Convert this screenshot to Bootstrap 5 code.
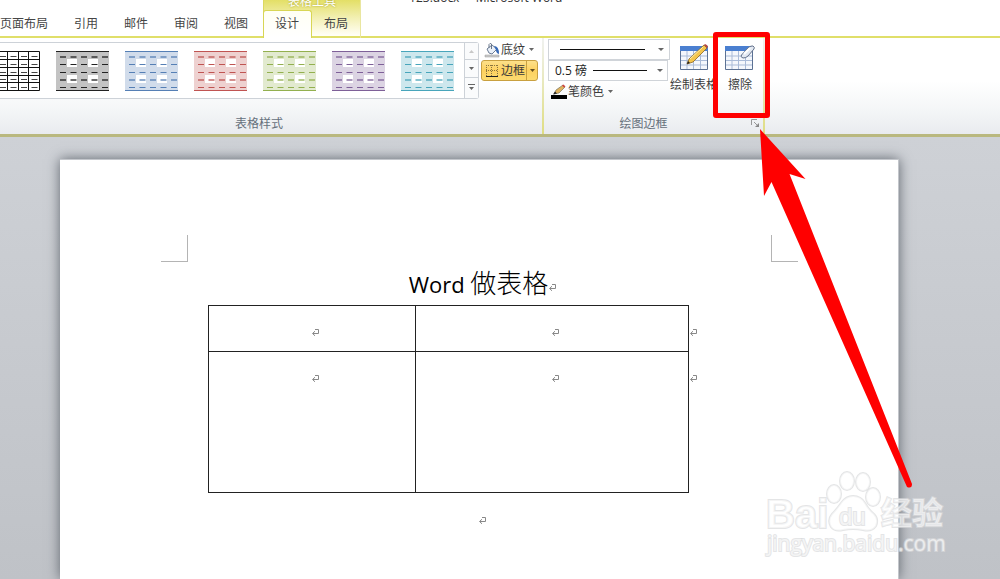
<!DOCTYPE html>
<html lang="zh-CN">
<head>
<meta charset="utf-8">
<meta name="viewport" content="width=device-width, initial-scale=1">
<title>123.docx - Microsoft Word</title>
<link href="https://cdn.jsdelivr.net/npm/bootstrap@5.3.0/dist/css/bootstrap.min.css" rel="stylesheet">
<style>
body{font-family:"Open Sans","Noto Sans CJK SC",sans-serif;font-size:12px;line-height:16px;color:#3b3b3b;background:#fff;overflow:hidden}
button{font-size:12px;color:#3b3b3b}
/* title and tab strip */
.tabstrip{height:38px;border-bottom:2px solid #e0df6a}
.main-tabs{column-gap:26px;height:26px;padding-right:15px}
.rtab{color:#454545;text-decoration:none;line-height:28px;height:26px}
.context{width:98px;height:38px;margin-bottom:-2px;background:linear-gradient(#e3df66,#f2efb0 45%,#fffef2 90%,#fff);border-left:1px solid #dcd860;border-right:1px solid #e9e6a0}
.context-title{height:10px;color:#fff;text-shadow:0 0 2px #a09a28}
.context-title span,.doc-title span{line-height:16px;white-space:pre}
.context .rtab{height:28px;padding:0 12px}
.context .rtab.active{background:linear-gradient(#fffff4,#fff);border:1px solid #d8d655;border-bottom:0;border-radius:3px 3px 0 0;margin-left:-1px;padding:0 11px;line-height:26px;width:49px}
.context-line{border-bottom:2px solid #e0df6a}
.doc-title{height:6px;margin-left:48px;color:#333}
/* ribbon */
.ribbon{height:99px;background:linear-gradient(#fff 45%,#f4f6f7 75%,#e9ebef);border-bottom:3px solid #b9b87f;z-index:2}
.ribbon-group{border-right:2px solid #e3e2a0;border-image:linear-gradient(#f0f2f2,#dfdd80) 1}
.styles-group{width:544px}
.borders-group{width:221px;padding-left:4px}
.group-title{color:#66707c;height:18px}
.styles-title{padding-right:24px}
.group-body{padding-top:4px;height:78px}
.gallery{height:57px;width:479px;border:1px solid #cdd2d8;border-left:0;border-radius:0 3px 3px 0;background:#fff}
.thumbs{gap:16px;padding-right:10px}
.thumb{width:53px;height:40px}
.spin{width:14px;background:#fafbfc;border-left:1px solid #cdd2d8}
.spin button+button{border-top:1px solid #cdd2d8!important}
.tool-stack{margin:-3px 0 0 2px}
.tool{height:21px;padding:0 2px;gap:1px;background:none;border:1px solid transparent;border-radius:3px;white-space:nowrap}
.tool.on{background:linear-gradient(#fde08a,#fdd160 50%,#fddb70);border-color:#c9a040}
.tool.on .drop{border-left:1px solid #c9a040;align-self:stretch;margin-right:-2px}
.drop{width:11px;justify-content:center}
.line-stack{margin-top:-3px}
.line-select{appearance:none;height:21px;border:1px solid #d0d4d9;padding:0 6px;color:#222;font-size:12px;background:#fff no-repeat right center}
.weight-select{width:120px;background-image:url("data:image/svg+xml,%3Csvg xmlns='http://www.w3.org/2000/svg' width='75' height='19'%3E%3Cpath d='M1 9.5h54' stroke='%23111'/%3E%3Cpath d='M65 8h6l-3 3z' fill='%23666'/%3E%3C/svg%3E")}
.style-select{width:122px;background-image:url("data:image/svg+xml,%3Csvg xmlns='http://www.w3.org/2000/svg' width='112' height='19'%3E%3Cpath d='M3 9.5h85' stroke='%23111'/%3E%3Cpath d='M101 8h6l-3 3z' fill='%23666'/%3E%3C/svg%3E")}
.big-tool{background:none;border:0;padding:2px 0 0;width:48px;white-space:nowrap}
.big-tool svg{display:block;margin:0 auto 4px}
.big-tool span{line-height:18px}
.erase{width:44px}
.launch{right:3px;bottom:6px}
.red-frame{left:-5px;top:-10px;width:57px;height:86px;border:5px solid #f00;border-radius:3px;pointer-events:none}
.red-arrow{left:39px;top:84px;pointer-events:none}
/* workspace */
.workspace{background:linear-gradient(#ced1d6,#bfc2c7);padding:22px 101px 0 60px}
.sheet{background:#fff;border:1px solid #c3c6cb;border-width:1px 1px 0 0;box-shadow:0 0 12px #5f656d;padding-top:75px}
.crop-row{padding:0 100px 0 101px}
.crop-mark{width:27px;height:27px;border-bottom:1px solid #b4b4b4}
.crop-left{border-right:1px solid #b4b4b4}
.crop-right{border-left:1px solid #b4b4b4}
.doc-body{padding:0 127px;color:#000}
.doc-heading{font:400 22px/42px "Open Sans","Noto Sans CJK SC",sans-serif;margin:0;padding-left:8px}
.doc-heading span{font-size:26px;font-weight:300}
.grid-table{width:481px;margin-left:21px;border-collapse:collapse}
.grid-table td{border:1px solid #222;padding:22px 0 0 7px;vertical-align:top;text-align:center;line-height:8px}
.grid-table tr{height:46px}
.grid-table tr+tr{height:141px}
.grid-table .c1{width:207px}
.row-end{left:100%;top:22px;margin-left:1px}
.pm{width:9px;height:9px;fill:none;stroke:#888}
.after{padding:23px 0 0 6px;line-height:8px}
.watermark{right:52px;bottom:18px;pointer-events:none}
</style>
</head>
<body class="vh-100 d-flex flex-column">
<svg class="d-none" aria-hidden="true">
  <symbol id="pilcrow" viewBox="0 0 9 9"><path d="M4 1.500h3.500v4H2M4 3.200L1.500 5.500 4 7.800"/></symbol>
  <symbol id="caret" viewBox="0 0 7 4"><path d="M0 0h7L3.500 4z"/></symbol>
  <symbol id="thumb" viewBox="0 0 53 40">
    <path d="M0 0h53v40H0z" fill="currentColor" opacity=".27"/>
    <path d="M0 .5h53M0 39.500h53" stroke="currentColor"/>
    <path d="M11 8h10v8H11zM32 8h10v8H32zM11 24h10v8H11zM32 24h10v8H32z" fill="#fff"/>
    <path d="M4 6h49M4 29h49" stroke="currentColor" stroke-width="2" stroke-dasharray="6 4.500" opacity=".65"/>
    <path d="M4 13.500h49M4 21.500h49M4 36.500h49" stroke="currentColor" stroke-dasharray="6 4.500"/>
  </symbol>
  <symbol id="sheet-icon" viewBox="0 0 30 28">
    <path d="M1.500 2.500h27v23h-27z" fill="#f4f7fc" stroke="#5b7193"/>
    <path d="M1 2h28v5H1z" fill="#4a7fd0"/>
    <path d="M2 12h26M2 16.500h26M2 21h26M8 7v18M14.500 7v18M21.500 7v18" stroke="#a9bbd8"/>
  </symbol>
</svg>

<header class="tabstrip d-flex align-items-end flex-shrink-0">
  <nav class="main-tabs d-flex" aria-label="功能区">
    <a class="rtab" href="#">页面布局</a><a class="rtab" href="#">引用</a><a class="rtab" href="#">邮件</a><a class="rtab" href="#">审阅</a><a class="rtab" href="#">视图</a>
  </nav>
  <div class="context d-flex flex-column">
    <div class="context-title d-flex justify-content-center align-items-end"><span>表格工具</span></div>
    <nav class="d-flex" aria-label="表格工具">
      <a class="rtab active" href="#" aria-current="page">设计</a><a class="rtab context-line flex-fill" href="#">布局</a>
    </nav>
  </div>
  <div class="doc-title d-flex align-items-end align-self-start"><span>123.docx  -  Microsoft Word</span></div>
</header>

<section class="ribbon d-flex flex-shrink-0 position-relative">
  <div class="ribbon-group styles-group d-flex flex-column">
    <div class="group-body d-flex">
      <div class="gallery d-flex">
        <div class="thumbs d-flex flex-fill justify-content-end align-items-center overflow-hidden">
          <svg class="thumb flex-shrink-0" viewBox="0 0 53 40"><path d="M.5.500h52v39H.5zM0 8.500h53M0 16.500h53M0 24.500h53M0 31.500h53M10.500 0v40M20.500 0v40M31.500 0v40M41.500 0v40" fill="none" stroke="#111"/><path d="M2.500 5.500h50M2.500 13.500h50M2.500 21.500h50M2.500 28.500h50M2.500 36.500h50" stroke="#444" stroke-dasharray="6 4.500"/></svg>
          <svg class="thumb flex-shrink-0" color="#222"><use href="#thumb"/></svg>
          <svg class="thumb flex-shrink-0" color="#557fb5"><use href="#thumb"/></svg>
          <svg class="thumb flex-shrink-0" color="#c05452"><use href="#thumb"/></svg>
          <svg class="thumb flex-shrink-0" color="#93b04f"><use href="#thumb"/></svg>
          <svg class="thumb flex-shrink-0" color="#7e6098"><use href="#thumb"/></svg>
          <svg class="thumb flex-shrink-0" color="#48a5bb"><use href="#thumb"/></svg>
        </div>
        <div class="spin d-flex flex-column">
          <button class="flex-fill border-0 p-0 bg-transparent d-flex align-items-center justify-content-center" aria-label="上一行"><svg width="5" height="3" fill="#c8c8c8"><path d="M0 3h5L2.500 0z"/></svg></button>
          <button class="flex-fill border-0 p-0 bg-transparent d-flex align-items-center justify-content-center" aria-label="下一行"><svg width="5" height="3" fill="#666"><use href="#caret"/></svg></button>
          <button class="flex-fill border-0 p-0 bg-transparent d-flex align-items-center justify-content-center" aria-label="其他"><svg width="7" height="7" fill="#666"><path d="M0 0h7v1H0zM1 3h5L3.500 6z"/></svg></button>
        </div>
      </div>
      <div class="tool-stack d-flex flex-column align-items-start">
        <button class="tool d-flex align-items-center">
          <svg width="16" height="16"><path d="M1 13h14v2H1z" fill="#ccc" stroke="#999" stroke-width=".5"/><path d="M3 7l5-4 5 4-5 5-3-1z" fill="#eaf0f8" stroke="#6b7c95"/><path d="M5 6V2.500Q6 .5 7.500 2v5" fill="none" stroke="#67758a"/><path d="M10 4q5 0 5 8-3-1-3-4z" fill="#3769b7"/></svg>
          <span>底纹</span><span class="drop d-flex align-items-center"><svg width="5" height="3" fill="#666"><use href="#caret"/></svg></span>
        </button>
        <button class="tool on d-flex align-items-center" aria-pressed="true">
          <svg width="16" height="16" fill="none" stroke="#8a7540"><path d="M2 2.500h12M2 7.500h12M2.500 2v11M7.500 2v11M13.500 2v11" stroke-dasharray="1 1"/><path d="M2 13.500h12" stroke="#222"/></svg>
          <span>边框</span><span class="drop d-flex align-items-center"><svg width="5" height="3" fill="#665020"><use href="#caret"/></svg></span>
        </button>
      </div>
    </div>
    <div class="group-title styles-title text-center">表格样式</div>
  </div>

  <div class="ribbon-group borders-group d-flex flex-column position-relative">
    <div class="group-body d-flex">
      <div class="line-stack d-flex flex-column align-items-start">
        <select class="line-select style-select" aria-label="笔样式"><option aria-label="单实线"></option></select>
        <select class="line-select weight-select" aria-label="笔划粗细"><option>0.5 磅</option></select>
        <button class="tool d-flex align-items-center">
          <svg width="16" height="16"><path d="M0 11h16v4H0z" fill="#000"/><path d="M3 10l2-4 7-5 2 2-6 6z" fill="#dfb35e" stroke="#665" stroke-width=".6"/><path d="M11 1.500l1.500-1 2 2-1.500 1z" fill="#c44"/><path d="M2 10.500l2-3 2 2z" fill="#222"/></svg>
          <span>笔颜色</span><span class="drop d-flex align-items-center"><svg width="5" height="3" fill="#666"><use href="#caret"/></svg></span>
        </button>
      </div>
      <button class="big-tool d-block text-center align-self-start">
        <svg width="30" height="28"><use href="#sheet-icon"/><path d="M8 20l2-5L25 1l3 3-14 14z" fill="#f4c54c" stroke="#8a6524" stroke-width=".8"/><path d="M25 1l1-1q3 1 3 3l-1 1z" fill="#b64845"/><path d="M8 20l1-3 2 2z" fill="#222"/><path d="M11 15L24 3" stroke="#fff0ab"/></svg>
        <span>绘制表格</span>
      </button>
      <div class="position-relative align-self-start">
        <button class="big-tool erase d-block text-center">
          <svg width="32" height="28"><use href="#sheet-icon" width="30" height="28"/><path d="M17.500 11L24 4q2-2 4-2h1q2 1 1 3l-6 7q-2 2-5 2-3-1-1.500-3z" fill="#e3e9f2" stroke="#63718a"/><path d="M20 10l6-6" stroke="#fff" stroke-width="2"/></svg>
          <span>擦除</span>
        </button>
        <div class="red-frame position-absolute"></div>
        <svg class="red-arrow position-absolute" width="160" height="364" fill="#f00" aria-hidden="true"><path d="M3 3L48.500 53 32.500 48 155 358q0 5-5 3L14.500 56 7 70z"/></svg>
      </div>
    </div>
    <div class="group-title text-center pe-4">绘图边框</div>
    <button class="launch position-absolute border-0 p-0 bg-transparent d-flex" aria-label="边框和底纹"><svg width="9" height="9" fill="none" stroke="#999"><path d="M.5 6V.5H6M3 3l4 4"/><path d="M8 4v4H4z" fill="#888" stroke="none"/></svg></button>
  </div>
</section>

<main class="workspace flex-fill d-flex flex-column position-relative">
  <article class="sheet flex-fill">
    <div class="crop-row d-flex justify-content-between"><span class="crop-mark crop-left"></span><span class="crop-mark crop-right"></span></div>
    <div class="doc-body">
      <h1 class="doc-heading text-center">Word <span>做表格</span><svg class="pm"><use href="#pilcrow"/></svg></h1>
      <table class="grid-table">
        <tr><td class="c1"><svg class="pm"><use href="#pilcrow"/></svg></td><td class="position-relative"><svg class="pm"><use href="#pilcrow"/></svg><svg class="pm row-end position-absolute"><use href="#pilcrow"/></svg></td></tr>
        <tr><td class="c1"><svg class="pm"><use href="#pilcrow"/></svg></td><td class="position-relative"><svg class="pm"><use href="#pilcrow"/></svg><svg class="pm row-end position-absolute"><use href="#pilcrow"/></svg></td></tr>
      </table>
      <div class="after text-center"><svg class="pm"><use href="#pilcrow"/></svg></div>
    </div>
  </article>
  <svg class="watermark position-absolute" width="184" height="96" fill="#fff" fill-opacity=".6" stroke="#d9dadc" stroke-opacity=".7" stroke-width="2" paint-order="stroke">
    <text x="2" y="63" font-family="Liberation Sans, sans-serif" font-weight="700" font-size="40">Bai</text>
    <path d="M89 31q-7 0-12 7t-9 11q-5 6-1 13 4 5 12 3 10-2 20 0 9 2 13-4 3-7-2-12-5-4-9-11t-12-7z"/>
    <ellipse cx="70" cy="29" rx="7" ry="9"/><ellipse cx="83" cy="16" rx="7" ry="9"/><ellipse cx="99" cy="17" rx="7" ry="9"/><ellipse cx="109" cy="32" rx="7" ry="9"/>
    <text x="75" y="60" font-family="Liberation Sans, sans-serif" font-size="24">du</text>
    <text x="117" y="59" font-family="Noto Sans CJK SC, sans-serif" font-weight="700" font-size="31">经验</text>
    <text x="3" y="86" font-family="Open Sans, sans-serif" font-size="21">jingyan.baidu.com</text>
  </svg>
</main>
<script src="https://cdn.jsdelivr.net/npm/bootstrap@5.3.0/dist/js/bootstrap.bundle.min.js"></script>
</body>
</html>
